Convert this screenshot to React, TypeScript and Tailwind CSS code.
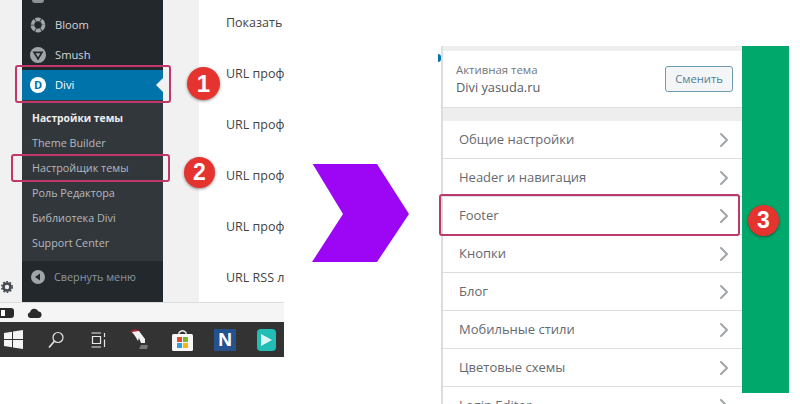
import React from 'react';
import { ChevronRight } from 'lucide-react';

const font = "font-['Open_Sans',sans-serif]";

const Badge = ({ n, className }: { n: number; className: string }) => (
  <div
    className={`absolute flex items-center justify-center rounded-full bg-[#e5342f] text-white font-bold font-['Liberation_Sans',sans-serif] shadow-[0_1px_3px_rgba(0,0,0,0.45)] ${className}`}
  >
    {n}
  </div>
);

const subItems = ['Настройки темы', 'Theme Builder', 'Настройщик темы', 'Роль Редактора', 'Библиотека Divi', 'Support Center'];
const contentRows = ['Показать', 'URL проф', 'URL проф', 'URL проф', 'URL проф', 'URL RSS л'];
const panelRows = ['Общие настройки', 'Header и навигация', 'Footer', 'Кнопки', 'Блог', 'Мобильные стили', 'Цветовые схемы', 'Login Editor'];

const Sidebar = () => (
  <div className="w-[141px] h-[302px] bg-[#23282d] flex flex-col">
    <div className="h-[3px] w-[12px] ml-[10px] bg-[#8c9196] rounded-b-[3px]" />
    <div className="h-[37px] pt-[12px] pl-[8px] flex items-start gap-[9px]">
      <svg width="16" height="16" viewBox="0 0 16 16" className="shrink-0 mt-[2px]">
        <circle cx="8" cy="8" r="5.6" fill="none" stroke="#a0a5aa" strokeWidth="3.6" strokeDasharray="5 0.8" />
      </svg>
      <span className="text-[11.2px] leading-[20px] text-[#d4d6d8]">Bloom</span>
    </div>
    <div className="h-[30px] pl-[8px] flex items-center gap-[9px]">
      <svg width="16" height="16" viewBox="0 0 16 16" className="shrink-0">
        <circle cx="8" cy="8" r="8" fill="#a0a5aa" />
        <path d="M2.500 4.500H13.500L8 13.500Z" fill="#23282d" />
        <path d="M5.600 6.200H10.400L8 10.200Z" fill="#a0a5aa" />
      </svg>
      <span className="text-[11.2px] text-[#d4d6d8]">Smush</span>
    </div>
    <div className="relative h-[30px] bg-[#0073aa] pl-[8px] flex items-center gap-[9px]">
      <div className="w-[16px] h-[16px] rounded-full bg-white text-[#0073aa] text-[11px] font-bold flex items-center justify-center">D</div>
      <span className="text-[11.2px] text-white">Divi</span>
      <div className="absolute right-0 top-[8px] w-0 h-0 border-y-[7px] border-y-transparent border-r-[7px] border-r-[#f1f1f1]" />
      <div className="absolute left-[-7px] right-[-8px] top-[-5px] bottom-[-3px] border-[2px] border-[#c2376b] rounded-[3px]" />
      <Badge n={1} className="left-[165px] top-[-3px] w-[33px] h-[33px] text-[24px]" />
    </div>
    <div className="flex-1 bg-[#32373c] pt-[5px] pl-[10px]">
      {subItems.map((item, i) => (
        <div
          key={i}
          className={`relative h-[25px] whitespace-nowrap ${i === 0 ? 'leading-[27px] text-[10.3px] font-bold text-[#eeeeee]' : 'leading-[25px] text-[10.8px] text-[#b4b9be]'}`}
        >
          {item}
          {i === 2 && (
            <>
              <div className="absolute left-[-21px] w-[159px] top-[-1px] h-[28px] border-[2px] border-[#c2376b] rounded-[3px]" />
              <Badge n={2} className="left-[152px] top-[2px] w-[31px] h-[31px] text-[23px]" />
            </>
          )}
        </div>
      ))}
    </div>
    <div className="h-[41px] bg-[#23282d] pl-[9px] pt-[7px] flex items-start gap-[9px]">
      <svg width="14" height="14" viewBox="0 0 14 14" className="shrink-0 mt-[2px]">
        <circle cx="7" cy="7" r="7" fill="#a0a5aa" />
        <path d="M9 3.500V10.500L4 7Z" fill="#23282d" />
      </svg>
      <span className="text-[10.8px] leading-[18px] text-[#8f959b]">Свернуть меню</span>
    </div>
  </div>
);

const Taskbar = () => (
  <div className="h-[35px] bg-[#333333] flex items-center overflow-hidden">
    <svg width="19" height="19" viewBox="0 0 19 19" className="ml-[4px] shrink-0">
      <path d="M0 3L8 1.800V9H0ZM9 1.600L19 0V9H9ZM0 10H8V17.200L0 16ZM9 10H19V19L9 17.400Z" fill="#f4f4f4" />
    </svg>
    <svg width="16" height="18" viewBox="0 0 16 18" className="ml-[25px] shrink-0" fill="none" stroke="#e8e8e8" strokeWidth="1.2">
      <circle cx="10" cy="6.500" r="5" />
      <path d="M6.400 10.200L1 16.500" strokeWidth="1.6" />
    </svg>
    <svg width="15" height="16" viewBox="0 0 15 16" className="ml-[27px] shrink-0" fill="none" stroke="#e8e8e8" strokeWidth="1.2">
      <path d="M0.500 1H10M0.500 15H10M1.500 4.500H9.500V11.500H1.500Z" />
      <path d="M13.500 1V5M13.500 7.500V15" />
    </svg>
    <svg width="22" height="24" viewBox="0 0 22 24" className="ml-[23px] shrink-0">
      <path d="M1 4Q5 -1 11 3L6 6Z" fill="#a5252c" />
      <path d="M3 4L10 3L13 7L16 11L16 15L12 15L10 10L9 13L6 8Z" fill="#f2f2f2" />
      <path d="M12 17L19 17L18 21H10Z" fill="#777777" />
    </svg>
    <svg width="21" height="22" viewBox="0 0 21 22" className="ml-[21px] shrink-0">
      <path d="M7 6V3.500Q10.500 0 14 3.500V6" fill="none" stroke="#f0f0f0" strokeWidth="1.3" />
      <rect x="0" y="5" width="21" height="17" rx="1.500" fill="#f6f6f6" />
      <rect x="5" y="8" width="5" height="5" fill="#e2492f" />
      <rect x="11" y="8" width="5" height="5" fill="#7db52c" />
      <rect x="5" y="14" width="5" height="5" fill="#2d9fdc" />
      <rect x="11" y="14" width="5" height="5" fill="#f4b515" />
    </svg>
    <div className="ml-[21px] w-[22px] h-[22px] shrink-0 bg-[#24528f] text-white text-[19px] font-bold leading-[22px] text-center font-['Liberation_Sans',sans-serif]">N</div>
    <div className="ml-[21px] w-[19px] h-[22px] shrink-0 rounded-[4px] bg-[#22bdb4] flex items-center justify-center">
      <svg width="13" height="14" viewBox="0 0 13 14">
        <path d="M1 1L12 7L1 13Z" fill="#d9f6f4" />
      </svg>
    </div>
  </div>
);

const LeftShot = () => (
  <div className={`w-[284px] shrink-0 flex flex-col ${font}`}>
    <div className="h-[302px] flex">
      <div className="w-[22px] bg-[#f1f1f1] flex flex-col justify-end items-center pb-[9px]">
        <svg width="12" height="12" viewBox="0 0 12 12" className="mr-[8px]">
          <circle cx="6" cy="6" r="3.500" fill="none" stroke="#454a50" strokeWidth="2.600" />
          <circle cx="6" cy="6" r="5.200" fill="none" stroke="#454a50" strokeWidth="1.600" strokeDasharray="1.800 1.500" />
        </svg>
      </div>
      <Sidebar />
      <div className="w-[36px] bg-[#f1f1f1]" />
      <div className="flex-1 bg-white overflow-hidden pl-[27px] pt-[11px] text-[12.5px] text-[#444444]">
        {contentRows.map((row, i) => (
          <div key={i} className="h-[51px] leading-[24px] whitespace-nowrap">{row}</div>
        ))}
      </div>
    </div>
    <div className="h-[20px] bg-[#f5f5f5] border-t border-[#dddddd] flex items-center">
      <div className="w-[14px] h-[10px] rounded-r-[3px] bg-[#2b2b2b] flex items-center">
        <div className="w-[4px] h-[6px] bg-white ml-[1px]" />
      </div>
      <svg width="15" height="10" viewBox="0 0 15 10" className="ml-[13px]">
        <path d="M3 10A3 3 0 0 1 3 4.200A4.500 4.500 0 0 1 11.500 3.500A3.300 3.300 0 0 1 12 10Z" fill="#2b2b2b" />
      </svg>
    </div>
    <Taskbar />
  </div>
);

const Arrow = () => (
  <div className="w-[157px] shrink-0 h-[404px] flex items-start">
    <svg width="100" height="100" viewBox="0 0 100 100" className="ml-[27px] mt-[163px]">
      <path d="M1.700 1H66L98 51L66 99H1L32 51Z" fill="#9d05f5" />
    </svg>
  </div>
);

const RightPanel = () => (
  <div className={`flex mt-[46px] h-[347px] ${font}`}>
    <div className="relative w-[301px] h-[358px] bg-white border-l-[2px] border-[#dddddd]">
      <div className="absolute left-[-5px] top-[8px] w-[3px] h-[8px] rounded-r-full bg-[#0073aa]" />
      <div className="h-[5px] bg-[#eeeeee]" />
      <div className="h-[57px] flex items-center justify-between pl-[13px] pr-[9px] border-b border-[#dddddd]">
        <div>
          <div className="text-[11.4px] leading-[15px] text-[#72777c]">Активная тема</div>
          <div className="text-[12.8px] leading-[18px] text-[#555d66] mt-[1px]">Divi yasuda.ru</div>
        </div>
        <div className="w-[68px] h-[26px] rounded-[3px] border border-[#6d9bb0] bg-[#f3f5f6] text-[#4d7f97] text-[11.2px] flex items-center justify-center">
          Сменить
        </div>
      </div>
      <div className="h-[13px] bg-[#eeeeee]" />
      {panelRows.map((row, i) => (
        <div
          key={i}
          className="relative h-[38px] flex items-center justify-between pl-[16px] pr-[6px] border-b border-[#dddddd] text-[13px] text-[#666a70]"
        >
          <span>{row}</span>
          <ChevronRight size={24} strokeWidth={2} className="text-[#a0a5aa]" />
          {i === 2 && (
            <>
              <div className="absolute left-[-4px] right-[2px] top-[-3px] bottom-[-2px] border-[2px] border-[#b93a6c] rounded-[3px]" />
              <Badge n={3} className="left-[305px] top-[8px] w-[31px] h-[31px] text-[23px]" />
            </>
          )}
        </div>
      ))}
    </div>
    <div className="w-[47px] bg-[#00a96b]" />
  </div>
);

export default function App() {
  return (
    <div className="w-[800px] h-[404px] bg-white flex items-start overflow-hidden">
      <LeftShot />
      <Arrow />
      <RightPanel />
    </div>
  );
}
